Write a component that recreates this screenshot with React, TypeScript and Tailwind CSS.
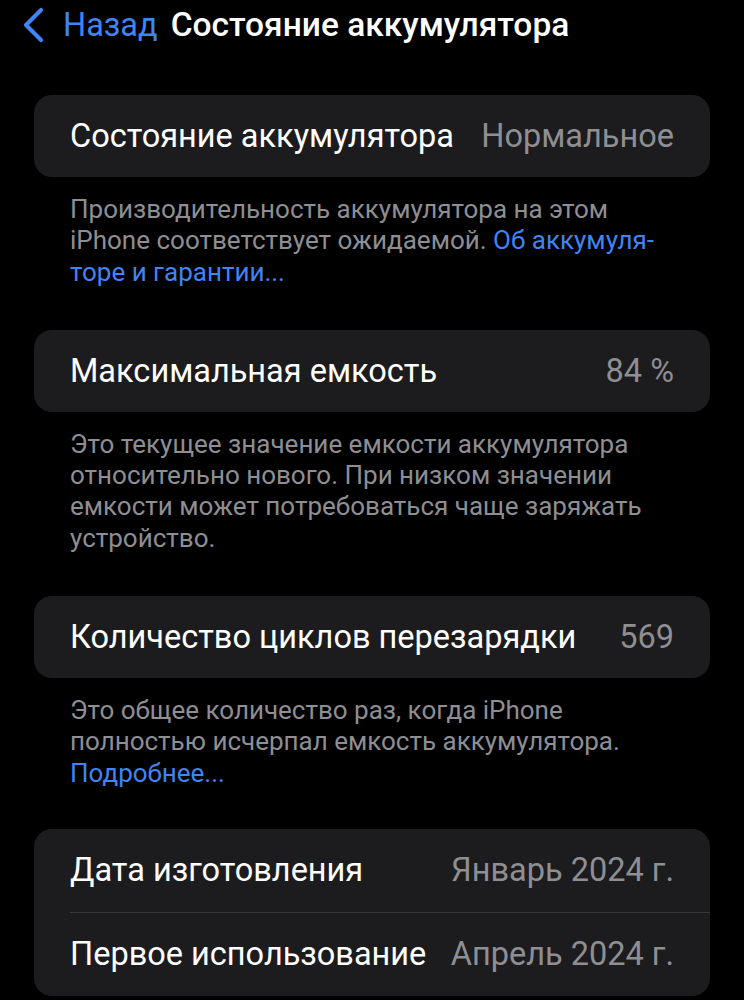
import React from 'react';

const font = { fontFamily: 'Roboto, "Noto Sans", sans-serif' };

function Row({ label, value, divider }: { label: string; value: string; divider?: boolean }) {
  return (
    <div className="flex flex-col">
      {divider && <div className="ml-9 h-px bg-[#38383a]" />}
      <div className="flex h-[82px] items-center justify-between pl-9 pr-9">
        <span className="text-[32.5px] text-white">{label}</span>
        <span className="text-[32.5px] text-[#8e8e93]">{value}</span>
      </div>
    </div>
  );
}

function Card({ children }: { children: React.ReactNode }) {
  return <div className="mx-[34px] overflow-hidden rounded-[18px] bg-[#1c1c1e]">{children}</div>;
}

function Footer({ children }: { children: React.ReactNode }) {
  return <div className="mx-[70px] mt-[17px] whitespace-nowrap text-[26px] leading-[31.3px] text-[#8e8e93]">{children}</div>;
}

const Link = ({ children }: { children: React.ReactNode }) => <span className="text-[#3f85f5]">{children}</span>;

export default function App() {
  return (
    <div className="min-h-[1000px] w-[744px] bg-black pb-10" style={font}>
      <div className="flex h-[50px] items-center pl-[20px]">
        <svg width="26" height="36" viewBox="0 0 26 36" fill="none">
          <path d="M21 3 L6 18 L21 33" stroke="#3f85f5" strokeWidth="4.2" strokeLinecap="round" strokeLinejoin="round" />
        </svg>
        <span className="ml-[17px] text-[32.5px] text-[#3f85f5]">Назад</span>
        <span className="ml-[13px] text-[33.5px] font-medium text-white">Состояние аккумулятора</span>
      </div>

      <div className="mt-[45px]">
        <Card>
          <Row label="Состояние аккумулятора" value="Нормальное" />
        </Card>
        <Footer>
          Производительность аккумулятора на этом
          <br />
          iPhone соответствует ожидаемой. <Link>Об аккумуля-</Link>
          <br />
          <Link>торе и гарантии...</Link>
        </Footer>
      </div>

      <div className="mt-[42px]">
        <Card>
          <Row label="Максимальная емкость" value="84 %" />
        </Card>
        <Footer>
          Это текущее значение емкости аккумулятора
          <br />
          относительно нового. При низком значении
          <br />
          емкости может потребоваться чаще заряжать
          <br />
          устройство.
        </Footer>
      </div>

      <div className="mt-[42px]">
        <Card>
          <Row label="Количество циклов перезарядки" value="569" />
        </Card>
        <Footer>
          Это общее количество раз, когда iPhone
          <br />
          полностью исчерпал емкость аккумулятора.
          <br />
          <Link>Подробнее...</Link>
        </Footer>
      </div>

      <div className="mt-[40px]">
        <Card>
          <div className="[&>div>div:last-child]:h-[83px]">
            <Row label="Дата изготовления" value="Январь 2024 г." />
            <Row label="Первое использование" value="Апрель 2024 г." divider />
          </div>
        </Card>
      </div>
    </div>
  );
}
